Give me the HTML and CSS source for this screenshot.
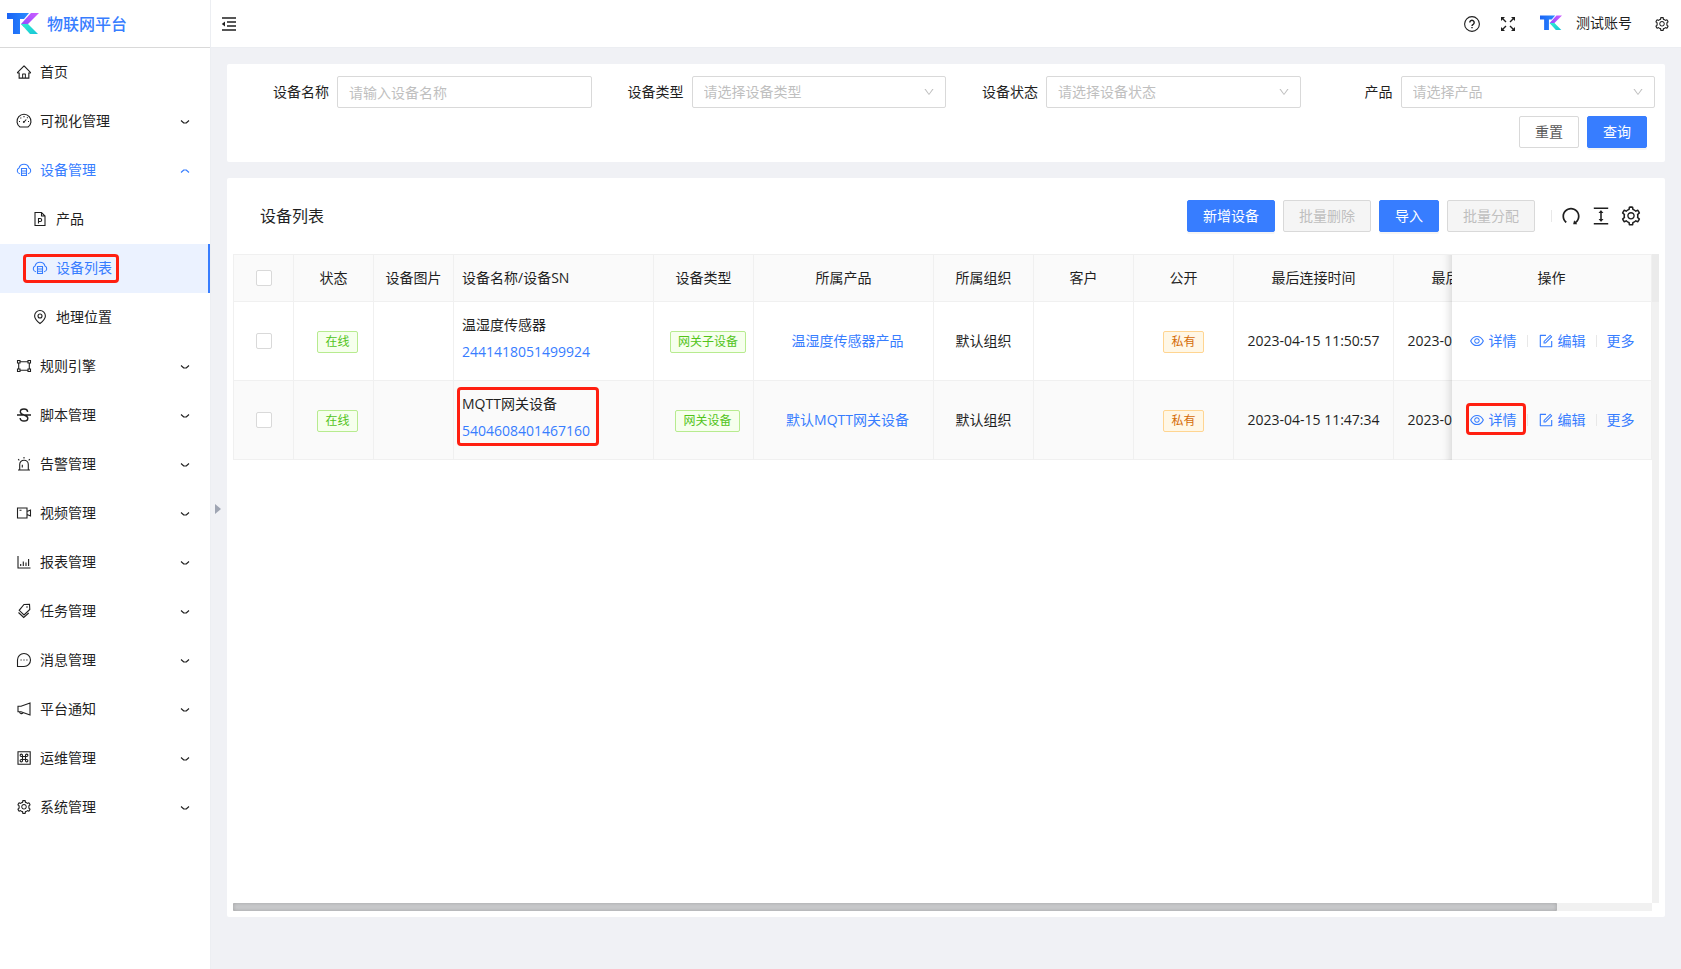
FILE: index.html
```html
<!DOCTYPE html>
<html lang="zh-CN">
<head>
  <meta charset="UTF-8" />
  <meta name="viewport" content="width=device-width, initial-scale=1.0"/>
  <title>物联网平台 - 设备列表</title>
  <link rel="stylesheet" href="styles.css">
</head>
<body>

  <!-- icons -->
  <svg class="sprite" aria-hidden="true">
    <defs>
      <linearGradient id="gBlue" x1="0" y1="0" x2="1" y2="0">
        <stop offset="0" stop-color="#1b63f5"/>
        <stop offset="1" stop-color="#2a8bff"/>
      </linearGradient>
      <linearGradient id="gPurple" x1="0" y1="1" x2="1" y2="0">
        <stop offset="0" stop-color="#8a4bff"/>
        <stop offset="1" stop-color="#cf5cff"/>
      </linearGradient>
      <linearGradient id="gCyan" x1="0" y1="0" x2="1" y2="1">
        <stop offset="0" stop-color="#2ff0d0"/>
        <stop offset="1" stop-color="#18c4d8"/>
      </linearGradient>
    </defs>
    <symbol id="logo" viewBox="0 0 32 22">
      <path fill="url(#gBlue)" d="M0 0h22l-5 6h-4v15H6V6H0z"/>
      <path fill="url(#gPurple)" d="M24 0h8L21 11l-4 3-3-3z"/>
      <path fill="url(#gCyan)" d="M14 11h7l10 10h-8z"/>
    </symbol>
    <symbol id="home" viewBox="0 0 1024 1024"><path fill="currentColor" d="M946.5 505L560.1 118.8l-25.9-25.9a31.5 31.5 0 00-44.4 0L77.5 505a63.9 63.9 0 00-18.8 46c.4 35.2 29.7 63.3 64.9 63.3h42.5V940h691.8V614.3h43.4c17.1 0 33.2-6.7 45.3-18.8a63.6 63.6 0 0018.7-45.3c0-17-6.7-33.1-18.8-45.2zM568 868H456V664h112v204zm217.9-325.7V868H632V640c0-22.1-17.9-40-40-40H432c-22.1 0-40 17.9-40 40v228H238.1V542.3h-96l370-369.7 23.1 23.1L882 542.3h-96.1z"/></symbol>
    <symbol id="setting" viewBox="0 0 1024 1024"><path fill="currentColor" d="M924.8 625.7l-65.5-56c3.1-19 4.7-38.4 4.7-57.8s-1.6-38.8-4.7-57.8l65.5-56a32.03 32.03 0 009.3-35.2l-.9-2.6a443.74 443.74 0 00-79.7-137.9l-1.8-2.1a32.12 32.12 0 00-35.1-9.5l-81.3 28.9c-30-24.6-63.5-44-99.7-57.6l-15.7-85a32.05 32.05 0 00-25.8-25.7l-2.7-.5c-52.1-9.4-106.9-9.4-159 0l-2.7.5a32.05 32.05 0 00-25.8 25.7l-15.8 85.4a351.86 351.86 0 00-99 57.4l-81.9-29.1a32 32 0 00-35.1 9.5l-1.8 2.1a446.02 446.02 0 00-79.7 137.9l-.9 2.6c-4.5 12.5-.8 26.5 9.3 35.2l66.3 56.6c-3.1 18.8-4.6 38-4.6 57.1 0 19.2 1.5 38.4 4.6 57.1L99 625.5a32.03 32.03 0 00-9.3 35.2l.9 2.6c18.1 50.4 44.9 96.9 79.7 137.9l1.8 2.1a32.12 32.12 0 0035.1 9.5l81.9-29.1c29.8 24.5 63.1 43.9 99 57.4l15.8 85.4a32.05 32.05 0 0025.8 25.7l2.7.5a449.4 449.4 0 00159 0l2.7-.5a32.05 32.05 0 0025.8-25.7l15.7-85a350 350 0 0099.7-57.6l81.3 28.9a32 32 0 0035.1-9.5l1.8-2.1c34.8-41.1 61.6-87.5 79.7-137.9l.9-2.6c4.5-12.3.8-26.3-9.3-35zM788.3 465.9c2.5 15.1 3.8 30.6 3.8 46.1s-1.3 31-3.8 46.1l-6.6 40.1 74.7 63.9a370.03 370.03 0 01-42.6 73.6L721 702.8l-31.4 25.8c-23.9 19.6-50.5 35-79.3 45.8l-38.1 14.3-17.9 97a377.5 377.5 0 01-85 0l-17.9-97.2-37.8-14.5c-28.5-10.8-55-26.2-78.7-45.7l-31.4-25.9-93.4 33.2c-17-22.9-31.2-47.6-42.6-73.6l75.5-64.5-6.5-40c-2.4-14.9-3.7-30.3-3.7-45.5 0-15.3 1.2-30.6 3.7-45.5l6.5-40-75.5-64.5c11.3-26.1 25.6-50.7 42.6-73.6l93.4 33.2 31.4-25.9c23.7-19.5 50.2-34.9 78.7-45.7l37.9-14.3 17.9-97.2c28.1-3.2 56.8-3.2 85 0l17.9 97 38.1 14.3c28.7 10.8 55.4 26.2 79.3 45.8l31.4 25.8 92.8-32.9c17 22.9 31.2 47.6 42.6 73.6L781.8 426l6.5 39.9zM512 326c-97.2 0-176 78.8-176 176s78.8 176 176 176 176-78.8 176-176-78.8-176-176-176zm79.2 255.2A111.6 111.6 0 01512 614c-29.9 0-58-11.7-79.2-32.8A111.6 111.6 0 01400 502c0-29.9 11.7-58 32.8-79.2C454 401.6 482.1 390 512 390c29.9 0 58 11.6 79.2 32.8A111.6 111.6 0 01624 502c0 29.9-11.7 58-32.8 79.2z"/></symbol>
    <symbol id="eye" viewBox="0 0 1024 1024"><path fill="currentColor" d="M942.2 486.2C847.4 286.5 704.1 186 512 186c-192.2 0-335.4 100.5-430.2 300.3a60.3 60.3 0 000 51.5C176.6 737.5 319.9 838 512 838c192.2 0 335.4-100.5 430.2-300.3 7.7-16.2 7.7-35 0-51.5zM512 766c-161.3 0-279.4-81.8-362.7-254C232.6 339.8 350.7 258 512 258c161.3 0 279.4 81.8 362.7 254C791.5 684.2 673.4 766 512 766zm-4-430c-97.2 0-176 78.8-176 176s78.8 176 176 176 176-78.8 176-176-78.8-176-176-176zm0 288c-61.9 0-112-50.1-112-112s50.1-112 112-112 112 50.1 112 112-50.1 112-112 112z"/></symbol>
    <symbol id="edit" viewBox="0 0 1024 1024"><path fill="currentColor" d="M904 512h-56c-4.4 0-8 3.6-8 8v320H184V184h320c4.4 0 8-3.6 8-8v-56c0-4.4-3.6-8-8-8H144c-17.7 0-32 14.3-32 32v736c0 17.7 14.3 32 32 32h736c17.7 0 32-14.3 32-32V520c0-4.4-3.6-8-8-8z M355.9 534.9L354 653.8c-.1 8.9 7.1 16.2 16 16.2h.4l118-2.9c2-.1 4-.9 5.4-2.3l415.9-415c3.1-3.1 3.1-8.2 0-11.3L785.4 114.3c-1.6-1.6-3.6-2.3-5.7-2.3s-4.1.8-5.7 2.3l-415.8 415a8.3 8.3 0 00-2.3 5.6zm63.5 23.6L779.7 199l45.2 45.1-360.5 359.7-45.7 1.1.7-46.4z"/></symbol>
    <symbol id="down" viewBox="0 0 1024 1024"><path fill="currentColor" d="M884 256h-75c-5.1 0-9.9 2.5-12.9 6.6L512 654.2 227.9 262.6c-3-4.1-7.8-6.6-12.9-6.6h-75c-6.5 0-10.3 7.4-6.5 12.7l352.6 486.1c12.8 17.6 39 17.6 51.7 0l352.6-486.1c3.9-5.3.1-12.7-6.4-12.7z"/></symbol>
    <symbol id="redo" viewBox="0 0 1024 1024"><path fill="currentColor" d="M758.2 839.1C851.8 765.9 912 651.9 912 523.9 912 303 733.5 124.3 512.6 124 291.4 123.7 112 302.8 112 523.9c0 125.2 57.5 236.9 147.6 310.2 3.5 2.8 8.6 2.2 11.4-1.3l39.4-50.5c2.7-3.4 2.1-8.3-1.2-11.1-8.1-6.6-15.9-13.7-23.4-21.2a318.64 318.64 0 01-68.6-101.7C200.4 609 192 567.1 192 523.9s8.4-85.1 25.1-124.5c16.1-38.1 39.2-72.3 68.6-101.7 29.4-29.4 63.6-52.5 101.7-68.6C426.9 212.4 468.8 204 512 204s85.1 8.4 124.5 25.1c38.1 16.1 72.3 39.2 101.7 68.6 29.4 29.4 52.5 63.6 68.6 101.7 16.7 39.4 25.1 81.3 25.1 124.5s-8.4 85.1-25.1 124.5a318.64 318.64 0 01-68.6 101.7c-9.3 9.3-19.1 18-29.3 26L668.2 724a8 8 0 00-14.1 3l-39.6 162.2c-1.2 5 2.6 9.9 7.7 9.9l167 .8c6.7 0 10.5-7.7 6.3-12.9l-37.3-47.9z"/></symbol>
    <symbol id="density" viewBox="0 0 1024 1024"><path fill="currentColor" d="M840 836H184c-4.4 0-8 3.6-8 8v60c0 4.4 3.6 8 8 8h656c4.4 0 8-3.6 8-8v-60c0-4.4-3.6-8-8-8zm0-724H184c-4.4 0-8 3.6-8 8v60c0 4.4 3.6 8 8 8h656c4.4 0 8-3.6 8-8v-60c0-4.4-3.6-8-8-8zM610.8 378c6 0 9.4-7 5.7-11.7L515.7 238.7a7.14 7.14 0 00-11.3 0L403.6 366.3a7.23 7.23 0 005.7 11.7H476v268h-62.8c-6 0-9.4 7-5.7 11.7l100.8 127.5c2.9 3.7 8.5 3.7 11.3 0l100.8-127.5c3.7-4.7.4-11.7-5.7-11.7H548V378h62.8z"/></symbol>
    <symbol id="arrow" viewBox="0 0 12 12"><path class="ln" stroke-linejoin="round" d="M2 4.500L4.800 7h2.400L10 4.500"/></symbol>
    <symbol id="fold" viewBox="0 0 16 16"><path class="ln thick" d="M1 2h14M6 6h9M6 10h9M1 14h14"/><path fill="currentColor" d="M4 5.500v5L.8 8z"/></symbol>
    <symbol id="help" viewBox="0 0 16 16"><circle class="ln" cx="8" cy="8" r="7.400"/><path class="ln thick" d="M5.800 6.500a2.200 2.200 0 1 1 3.400 1.800Q8 9 8 10M8 11v1.300"/></symbol>
    <symbol id="full" viewBox="0 0 16 16"><path class="ln thick" d="M2 2l4 4M14 2l-4 4M2 14l4-4M14 14l-4-4"/><path fill="currentColor" d="M1 1h4L1 5zM15 1v4l-4-4zM1 15v-4l4 4zM15 15h-4l4-4z"/></symbol>
    <symbol id="dash" viewBox="0 0 16 16"><path class="ln" d="M4 14A7 7 0 1 1 12 14zM8 9l2.300-2.500M8 3v1.200M4.500 4.700l.7.700M11 5l.7-.7M3 8.500h1M12 8.500h1"/><circle cx="7.800" cy="9" r=".9" fill="currentColor"/></symbol>
    <symbol id="cloud" viewBox="0 0 16 16"><path class="ln" d="M4 11.700A3 3 0 0 1 3 6a5.200 5.200 0 0 1 10 0A3 3 0 0 1 12 11.700M5.500 6.500h5v7h-5zM5.500 9h5M5.500 11.300h5"/></symbol>
    <symbol id="file" viewBox="0 0 16 16"><path class="ln" d="M3 1.500h6.500L13 5v9.500H3zM9.500 1.500V5H13M6.500 12.500v-5h1.700a1.500 1.500 0 0 1 0 3H6.500"/></symbol>
    <symbol id="pin" viewBox="0 0 16 16"><path class="ln" d="M8 14.500C4.500 11.700 2.600 9.500 2.600 6.900a5.400 5.400 0 0 1 10.800 0c0 2.600-1.900 4.800-5.400 7.600z"/><circle class="ln" cx="8" cy="7" r="2"/></symbol>
    <symbol id="gateway" viewBox="0 0 16 16"><path class="ln" d="M1.500 2.500h2.500v2.500H1.500zM12 2.500h2.500v2.500H12zM1.500 11h2.500v2.500H1.500zM12 11h2.500v2.500H12zM4 3.700h8M4 12.300h8M2.700 5v6M13.300 5v6"/></symbol>
    <symbol id="strike" viewBox="0 0 16 16"><path class="ln thick" d="M1 8h14M11.700 4.800C11.500 3 10 2 8 2S4.300 3 4.300 4.700C4.300 6.500 6 7.300 8 8s3.800 1.300 3.800 3.200S10.200 14 8 14s-3.800-1.200-3.900-3"/></symbol>
    <symbol id="alert" viewBox="0 0 16 16"><path class="ln" d="M2 14h12M3.700 14V8.500a4.300 4.300 0 0 1 8.600 0V14M8 1v1.500M2.200 3.200l1.100 1.100M13.800 3.200l-1.100 1.100M6.300 11.500V8.700"/></symbol>
    <symbol id="video" viewBox="0 0 16 16"><path class="ln" d="M1.500 3h9.500v10H1.500zM11 6.500L14.500 5v6L11 9.500M3.500 5.200h2"/></symbol>
    <symbol id="chart" viewBox="0 0 16 16"><path class="ln" d="M2 2v12h12.500M4.700 12v-2M7.300 12V7.500M10 12V8.500M12.600 12V5"/></symbol>
    <symbol id="tags" viewBox="0 0 16 16"><path class="ln" d="M8 1.500l5.500-.2.300 5.200-5.800 5.500-4.800-4.700zM2.500 9.500l5.200 5 5-4.500"/><circle cx="11" cy="4" r=".8" fill="currentColor"/></symbol>
    <symbol id="message" viewBox="0 0 16 16"><path class="ln" d="M1.500 14.500V8A6.500 6.500 0 1 1 8 14.500H1.500z"/><path class="ln" d="M4.500 8h1.200M7.400 8h1.200M10.300 8h1.200"/></symbol>
    <symbol id="notice" viewBox="0 0 16 16"><path class="ln" d="M2 5.300h3L14 2v12l-9-3.300H2zM3.500 10.700a2 2 0 0 0 3.800.8"/></symbol>
    <symbol id="command" viewBox="0 0 16 16"><path class="ln" d="M2 1.800h12.200v12.400H2z"/><path class="ln" d="M6.500 6.500h3v3h-3zM6.500 6.500H5.300a1.200 1.200 0 1 1 1.200-1.200zM9.500 6.500V5.300a1.200 1.200 0 1 1 1.200 1.200zM9.500 9.500h1.200a1.200 1.200 0 1 1-1.200 1.200zM6.500 9.500v1.200a1.200 1.200 0 1 1-1.200-1.200z"/></symbol>
  </svg>

  <aside class="sidebar">
    <a class="brand" href="#">
      <svg class="brand-logo"><use href="#logo"/></svg>
      <span>物联网平台</span>
    </a>
    <nav class="menu">
      <a href="#"><svg class="icon"><use href="#home"/></svg><span>首页</span></a>
      <a href="#"><svg class="icon"><use href="#dash"/></svg><span>可视化管理</span><svg class="arrow"><use href="#arrow"/></svg></a>
      <a href="#" class="open"><svg class="icon"><use href="#cloud"/></svg><span>设备管理</span><svg class="arrow"><use href="#arrow"/></svg></a>
      <a href="#" class="sub"><svg class="icon"><use href="#file"/></svg><span>产品</span></a>
      <a href="#" class="sub active"><svg class="icon"><use href="#cloud"/></svg><span>设备列表</span></a>
      <a href="#" class="sub"><svg class="icon"><use href="#pin"/></svg><span>地理位置</span></a>
      <a href="#"><svg class="icon"><use href="#gateway"/></svg><span>规则引擎</span><svg class="arrow"><use href="#arrow"/></svg></a>
      <a href="#"><svg class="icon"><use href="#strike"/></svg><span>脚本管理</span><svg class="arrow"><use href="#arrow"/></svg></a>
      <a href="#"><svg class="icon"><use href="#alert"/></svg><span>告警管理</span><svg class="arrow"><use href="#arrow"/></svg></a>
      <a href="#"><svg class="icon"><use href="#video"/></svg><span>视频管理</span><svg class="arrow"><use href="#arrow"/></svg></a>
      <a href="#"><svg class="icon"><use href="#chart"/></svg><span>报表管理</span><svg class="arrow"><use href="#arrow"/></svg></a>
      <a href="#"><svg class="icon"><use href="#tags"/></svg><span>任务管理</span><svg class="arrow"><use href="#arrow"/></svg></a>
      <a href="#"><svg class="icon"><use href="#message"/></svg><span>消息管理</span><svg class="arrow"><use href="#arrow"/></svg></a>
      <a href="#"><svg class="icon"><use href="#notice"/></svg><span>平台通知</span><svg class="arrow"><use href="#arrow"/></svg></a>
      <a href="#"><svg class="icon"><use href="#command"/></svg><span>运维管理</span><svg class="arrow"><use href="#arrow"/></svg></a>
      <a href="#"><svg class="icon"><use href="#setting"/></svg><span>系统管理</span><svg class="arrow"><use href="#arrow"/></svg></a>
    </nav>
  </aside>

  <div class="page">
    <header class="topbar">
      <button class="icon-btn" aria-label="收起菜单"><svg class="icon"><use href="#fold"/></svg></button>
      <div class="topbar-right">
        <button class="icon-btn" aria-label="帮助"><svg class="icon"><use href="#help"/></svg></button>
        <button class="icon-btn" aria-label="全屏"><svg class="icon"><use href="#full"/></svg></button>
        <a class="account" href="#"><svg class="avatar"><use href="#logo"/></svg><span>测试账号</span></a>
        <button class="icon-btn" aria-label="设置"><svg class="icon"><use href="#setting"/></svg></button>
      </div>
    </header>

    <main class="content">
      <button class="handle" aria-label="折叠"></button>

      <form class="card search">
        <div class="fields">
          <div class="field">
            <label for="name">设备名称</label>
            <div class="control"><input id="name" type="text" placeholder="请输入设备名称"></div>
          </div>
          <div class="field">
            <label for="type">设备类型</label>
            <div class="control"><select id="type"><option>请选择设备类型</option></select><svg class="caret"><use href="#down"/></svg></div>
          </div>
          <div class="field">
            <label for="state">设备状态</label>
            <div class="control"><select id="state"><option>请选择设备状态</option></select><svg class="caret"><use href="#down"/></svg></div>
          </div>
          <div class="field">
            <label for="product">产品</label>
            <div class="control"><select id="product"><option>请选择产品</option></select><svg class="caret"><use href="#down"/></svg></div>
          </div>
        </div>
        <div class="search-actions">
          <button type="reset" class="btn">重置</button>
          <button type="button" class="btn primary">查询</button>
        </div>
      </form>

      <section class="card list">
        <div class="toolbar">
          <h1>设备列表</h1>
          <div class="toolbar-buttons">
            <button class="btn primary">新增设备</button>
            <button class="btn" disabled>批量删除</button>
            <button class="btn primary">导入</button>
            <button class="btn" disabled>批量分配</button>
          </div>
          <div class="tools">
            <button class="icon-btn" aria-label="刷新"><svg class="tool"><use href="#redo"/></svg></button>
            <button class="icon-btn" aria-label="密度"><svg class="tool"><use href="#density"/></svg></button>
            <button class="icon-btn" aria-label="列设置"><svg class="tool"><use href="#setting"/></svg></button>
          </div>
        </div>

        <div class="table-box">
          <div class="table-view">
            <div class="table-scroll">
              <table class="main-table">
                <colgroup>
                  <col class="w60"><col class="w80"><col class="w80"><col class="w200"><col class="w100"><col class="w180">
                  <col class="w100"><col class="w100"><col class="w100"><col class="w160"><col class="w160">
                </colgroup>
                <thead>
                  <tr>
                    <th><input type="checkbox" aria-label="全选"></th>
                    <th>状态</th>
                    <th>设备图片</th>
                    <th class="left">设备名称/设备SN</th>
                    <th>设备类型</th>
                    <th>所属产品</th>
                    <th>所属组织</th>
                    <th>客户</th>
                    <th>公开</th>
                    <th>最后连接时间</th>
                    <th>最后断开时间</th>
                  </tr>
                </thead>
                <tbody>
                  <tr>
                    <td><input type="checkbox" aria-label="选择温湿度传感器"></td>
                    <td><span class="tag green">在线</span></td>
                    <td></td>
                    <td class="left"><div class="device"><span>温湿度传感器</span><a href="#">2441418051499924</a></div></td>
                    <td><span class="tag green">网关子设备</span></td>
                    <td><a class="product" href="#">温湿度传感器产品</a></td>
                    <td>默认组织</td>
                    <td></td>
                    <td><span class="tag orange">私有</span></td>
                    <td>2023-04-15 11:50:57</td>
                    <td>2023-04-15 11:50:57</td>
                  </tr>
                  <tr>
                    <td><input type="checkbox" aria-label="选择MQTT网关设备"></td>
                    <td><span class="tag green">在线</span></td>
                    <td></td>
                    <td class="left"><div class="device marked"><span>MQTT网关设备</span><a href="#">5404608401467160</a></div></td>
                    <td><span class="tag green">网关设备</span></td>
                    <td><a class="product" href="#">默认MQTT网关设备</a></td>
                    <td>默认组织</td>
                    <td></td>
                    <td><span class="tag orange">私有</span></td>
                    <td>2023-04-15 11:47:34</td>
                    <td>2023-04-15 11:47:34</td>
                  </tr>
                </tbody>
              </table>
            </div>

            <!-- fixed right column -->
            <div class="table-fixed">
              <table>
                <thead>
                  <tr><th>操作</th></tr>
                </thead>
                <tbody>
                  <tr>
                    <td>
                      <div class="actions">
                        <a href="#"><svg class="icon"><use href="#eye"/></svg>详情</a>
                        <a href="#"><svg class="icon"><use href="#edit"/></svg>编辑</a>
                        <a href="#">更多</a>
                      </div>
                    </td>
                  </tr>
                  <tr>
                    <td>
                      <div class="actions">
                        <a href="#" class="marked"><svg class="icon"><use href="#eye"/></svg>详情</a>
                        <a href="#"><svg class="icon"><use href="#edit"/></svg>编辑</a>
                        <a href="#">更多</a>
                      </div>
                    </td>
                  </tr>
                </tbody>
              </table>
            </div>
          </div>
          <div class="vbar"></div>
          <div class="hbar"><div class="thumb"></div></div>
        </div>
      </section>
    </main>
  </div>

</body>
</html>
```
FILE: styles.css
```css
*,
*::before {
  box-sizing: border-box;
}

body {
  margin: 0;
  min-height: 100vh;
  display: flex;
  background: #f0f1f5;
  color: #1f1f1f;
  font-family: "Open Sans", "Noto Sans CJK SC", sans-serif;
  font-size: 14px;
  line-height: 22px;
}

a {
  color: #377dff;
  text-decoration: none;
}

button,
input,
select {
  font: inherit;
}

.sprite {
  position: absolute;
  width: 0;
  height: 0;
}

.ln {
  fill: none;
  stroke: currentColor;
  stroke-width: 1.1;
}

.thick {
  stroke-width: 1.4;
}

.icon {
  width: 16px;
  height: 16px;
  flex: none;
}

.icon-btn {
  display: flex;
  padding: 0;
  border: none;
  background: none;
  color: #1f1f1f;
  cursor: pointer;
}

/* sidebar */
.sidebar {
  width: 211px;
  flex: none;
  background: #fff;
  border-right: 1px solid #eceef2;
}

.brand {
  display: flex;
  align-items: center;
  gap: 8px;
  height: 48px;
  padding-left: 7px;
  border-bottom: 1px solid #d9d9d9;
  font-size: 16px;
  font-weight: 500;
}

.brand-logo {
  width: 32px;
  height: 22px;
}

.menu a {
  display: flex;
  align-items: center;
  gap: 8px;
  height: 49px;
  padding: 0 19px 2px 16px;
  color: #1f1f1f;
}

.menu a.open,
.menu a.active {
  color: #377dff;
}

.menu .sub {
  padding-left: 32px;
}

.menu .active {
  position: relative;
  background: #ebf2ff;
  border-right: 2px solid #377dff;
}

.menu .active::before {
  content: "";
  position: absolute;
  inset: 10px auto 10px 23px;
  width: 96px;
}

.arrow {
  width: 12px;
  height: 12px;
  margin: 2px 0 0 auto;
}

.open .arrow {
  transform: rotate(180deg);
}

/* red highlight boxes */
.menu .active::before,
.marked::before {
  border: 3px solid #ff1f10;
  border-radius: 4px;
}

.marked {
  position: relative;
}

.marked::before {
  content: "";
  position: absolute;
}

.device.marked::before {
  inset: 0 auto 0 -5px;
  width: 142px;
}

.actions .marked::before {
  inset: -6px -9px -4px -3px;
}

/* top bar */
.page {
  flex: 1;
  min-width: 0;
  display: flex;
  flex-direction: column;
}

.topbar {
  display: flex;
  align-items: center;
  justify-content: space-between;
  height: 48px;
  padding: 0 11px 0 10px;
  background: #fff;
  border-bottom: 1px solid #eceef2;
}

.topbar-right {
  display: flex;
  align-items: center;
  gap: 20px;
}

.account {
  display: flex;
  align-items: center;
  gap: 14px;
  margin: 0 2px 0 4px;
  padding-bottom: 1px;
  color: #1f1f1f;
}

.avatar {
  width: 22px;
  height: 16px;
}

/* content */
.content {
  position: relative;
  flex: 1;
  display: flex;
  flex-direction: column;
  gap: 16px;
  padding: 16px 16px 52px;
}

.handle {
  position: absolute;
  left: 4px;
  top: 50%;
  padding: 0;
  background: none;
  border: 5px solid transparent;
  border-left: 6px solid #9fa5b3;
  border-right: 0;
  transform: translateY(-50%);
}

.card {
  background: #fff;
  border-radius: 2px;
}

.search {
  padding: 12px 10px 14px;
}

.fields {
  display: grid;
  grid-template-columns: repeat(4, 1fr);
}

.field {
  display: flex;
  align-items: center;
}

.field label {
  width: 100px;
  padding-right: 8px;
  text-align: right;
}

.control {
  position: relative;
  flex: 1;
}

.control input,
.control select {
  display: block;
  width: 100%;
  height: 32px;
  padding: 0 11px;
  border: 1px solid #d9d9d9;
  border-radius: 2px;
  background: #fff;
  color: #bfbfbf;
  appearance: none;
}

.control input::placeholder {
  color: #bfbfbf;
}

.caret {
  position: absolute;
  right: 11px;
  top: 10px;
  width: 12px;
  height: 12px;
  color: #bfbfbf;
  pointer-events: none;
}

.search-actions {
  display: flex;
  justify-content: flex-end;
  gap: 8px;
  margin-top: 8px;
  padding-right: 8px;
}

.btn {
  height: 32px;
  padding: 0 15px;
  border: 1px solid #d9d9d9;
  border-radius: 2px;
  background: #fff;
  color: #595959;
  cursor: pointer;
}

.btn.primary {
  border-color: #377dff;
  background: #377dff;
  color: #fff;
  box-shadow: 0 2px 0 rgba(0, 0, 0, 0.04);
}

.btn:disabled {
  background: #f5f5f5;
  color: #bfbfbf;
  cursor: not-allowed;
}

/* device list */
.list {
  flex: 1;
  min-width: 0;
  display: flex;
  flex-direction: column;
  padding: 0 6px 6px;
}

.toolbar {
  display: flex;
  align-items: center;
  height: 76px;
  padding: 0 17px 0 27px;
}

.toolbar h1 {
  margin: 0;
  font-size: 16px;
  font-weight: 400;
}

.toolbar-buttons {
  display: flex;
  gap: 8px;
  margin-left: auto;
}

.tools {
  display: flex;
  align-items: center;
  gap: 8px;
  margin-left: 16px;
}

.tools::before {
  content: "";
  width: 1px;
  height: 12px;
  background: #e8e8e8;
}

.tool {
  width: 22px;
  height: 22px;
}

.table-box {
  flex: 1;
  display: grid;
  grid-template-columns: minmax(0, 1fr) 7px;
  grid-template-rows: 1fr 8px;
}

.table-view {
  display: flex;
  align-items: flex-start;
  border-top: 1px solid #f0f0f0;
}

.table-scroll {
  flex: 1;
  min-width: 0;
  overflow: hidden;
  border-left: 1px solid #f0f0f0;
}

.table-fixed {
  position: relative;
  width: 200px;
}

.table-fixed::before {
  content: "";
  position: absolute;
  top: 0;
  bottom: 0;
  left: -30px;
  width: 30px;
  box-shadow: inset -10px 0 8px -8px rgba(0, 0, 0, 0.15);
}

.vbar {
  background: linear-gradient(#ebebeb 48px, #f1f1f1 48px);
}

.hbar {
  background: #f1f1f1;
}

.thumb {
  width: calc(100% - 95px);
  height: 8px;
  border-radius: 1px;
  background: #c9cacc;
  box-shadow: inset 0 0 4px rgba(0, 0, 0, 0.2);
}

table {
  width: 100%;
  table-layout: fixed;
  border-collapse: separate;
  border-spacing: 0;
}

.main-table {
  width: 1320px;
}

.w60 { width: 60px; }
.w80 { width: 80px; }
.w100 { width: 100px; }
.w160 { width: 160px; }
.w180 { width: 180px; }
.w200 { width: 200px; }

th,
td {
  padding: 0 8px;
  border-right: 1px solid #f0f0f0;
  border-bottom: 1px solid #f0f0f0;
  background: #fff;
  font-weight: 400;
  text-align: center;
  white-space: nowrap;
}

th {
  height: 47px;
  background: #fafafa;
}

td {
  height: 79px;
}

tr:nth-child(2) td {
  background: #fafafa;
}

.left {
  text-align: left;
}

input[type="checkbox"] {
  display: block;
  width: 16px;
  height: 16px;
  margin: 0 auto;
  appearance: none;
  border: 1px solid #d9d9d9;
  border-radius: 2px;
  background: #fff;
}

.device {
  display: flex;
  flex-direction: column;
  gap: 5px;
  margin-bottom: 8px;
  padding: 6px 0 4px;
}

.tag {
  display: inline-block;
  padding: 0 7px;
  border: 1px solid;
  border-radius: 2px;
  font-size: 12px;
  line-height: 20px;
}

.green {
  margin-left: 8px;
  border-color: #b7eb8f;
  background: #f6ffed;
  color: #52c41a;
}

.orange {
  border-color: #ffd591;
  background: #fff7e6;
  color: #d46b08;
}

.product {
  margin-left: 8px;
}

.actions {
  display: flex;
  align-items: center;
  justify-content: center;
}

.actions a {
  display: flex;
  align-items: center;
  gap: 4px;
}

.actions a + a::before {
  content: "";
  width: 1px;
  height: 12px;
  margin: 0 6px 0 10px;
  background: #e8e8e8;
}
```
